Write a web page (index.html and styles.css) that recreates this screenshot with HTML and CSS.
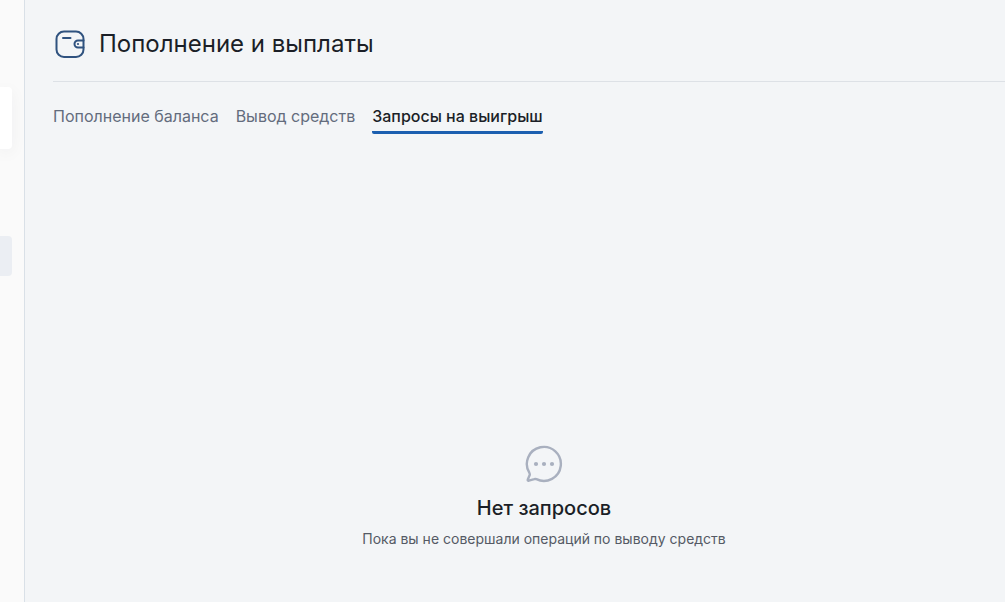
FILE: index.html
```
<!DOCTYPE html>
<html lang="ru">
    <head>
        <meta charset="UTF-8">
        <meta name="viewport" content="width=device-width, initial-scale=1.0">
        <title>Пополнение и выплаты</title>
        <link rel="stylesheet" href="styles.css">
    </head>
    <body>
        <aside class="sidebar">
            <div class="sidebar-card"></div>
            <div class="sidebar-active"></div>
        </aside>
        <main class="main">
            <header class="header">
                <svg class="wallet" viewBox="0 0 34 34" fill="none" stroke="#2f527f" stroke-width="2" stroke-linecap="round" aria-hidden="true">
                    <rect x="3.5" y="4.5" width="27" height="25.5" rx="7.5"/>
                    <path d="M10 11h7.5"/>
                    <path d="M30.5 13.5H25a3.5 3.5 0 0 0 0 7h5.5"/>
                    <circle cx="25" cy="17" r="1.1" fill="#2f527f" stroke="none"/>
                </svg>
                <h1 class="title">Пополнение и выплаты</h1>
            </header>
            <nav class="tabs">
                <a class="tab" href="#deposit">Пополнение баланса</a>
                <a class="tab" href="#withdraw">Вывод средств</a>
                <a class="tab tab-active" href="#requests">Запросы на выигрыш</a>
            </nav>
            <section class="empty">
                <svg class="bubble" viewBox="0 0 40 40" fill="none" aria-hidden="true">
                    <path d="M5.3 28.7A17 17 0 1 1 12.4 35.2Q11.4 34.7 10.3 35.1L4.8 36.7Q3.4 36.9 3.8 35.5L5.7 31.1Q6 30 5.3 28.7Z" stroke="#a9b0bf" stroke-width="2.4" stroke-linejoin="round"/>
                    <g fill="#a9b0bf">
                        <circle cx="12" cy="20" r="2.1"/>
                        <circle cx="20" cy="20" r="2.1"/>
                        <circle cx="28" cy="20" r="2.1"/>
                    </g>
                </svg>
                <h2 class="empty-title">Нет запросов</h2>
                <p class="empty-text">Пока вы не совершали операций по выводу средств</p>
            </section>
        </main>
    </body>
</html>
```
FILE: styles.css
```
:root {
    --bg:     #f3f5f7;
    --side:   #fafafa;
    --line:   #dde1e6;
    --text:   #1b1f27;
    --muted:  #636c7d;
    --accent: #1b5fb0;
}
* {
    box-sizing: border-box;
}
body {
    display: flex;
    min-height: 100vh;
    margin: 0;
    overflow: hidden;
    background: var(--bg);
    color: var(--text);
    font-family: Inter, sans-serif;
}

/* Sidebar */
.sidebar {
    flex: 0 0 25px;
    padding: 87px 12px 0 0;
    border-right: 1px solid #d9e0e7;
    background: var(--side);
}
.sidebar-card {
    height: 62px;
    border-radius: 0 4px 4px 0;
    background: #fff;
    box-shadow: 0 4px 16px rgba(30, 40, 60, 0.05);
}
.sidebar-active {
    height: 40px;
    margin-top: 87px;
    border-radius: 0 4px 4px 0;
    background: #ebeef3;
}

/* Content runs past the right edge of the window */
.main {
    flex: 1;
    margin-right: -30px;
    padding-left: 28px;
}
.header {
    display: flex;
    align-items: center;
    gap: 12px;
    height: 82px;
    padding-top: 6px;
    border-bottom: 1px solid var(--line);
}
.wallet {
    width: 34px;
    height: 34px;
}
.title {
    margin: 0;
    font-size: 24px;
    font-weight: 400;
    line-height: 32px;
}
.tabs {
    display: flex;
    gap: 17px;
    margin-top: 19px;
}
.tab {
    padding: 3px 0;
    border-bottom: 3px solid transparent;
    color: var(--muted);
    font-size: 16px;
    line-height: 24px;
    text-decoration: none;
}
.tab-active {
    border-color: var(--accent);
    border-radius: 2px;
    color: var(--text);
    font-weight: 500;
}

/* Empty state */
.empty {
    display: flex;
    flex-direction: column;
    align-items: center;
    padding-top: 310px;
}
.bubble {
    width: 40px;
    height: 40px;
}
.empty-title {
    margin: 12px 0 0;
    font-size: 20px;
    font-weight: 500;
    line-height: 24px;
}
.empty-text {
    margin: 9px 0 0;
    color: #555a65;
    font-size: 14px;
    font-weight: 400;
    line-height: 20px;
}
```
